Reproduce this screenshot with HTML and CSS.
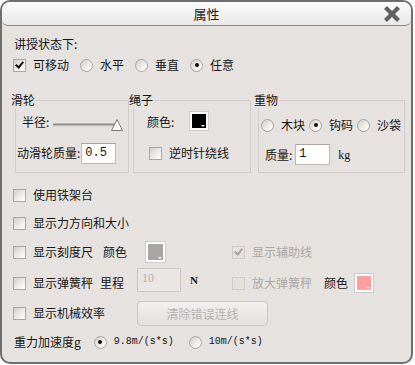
FILE: index.html
```html
<!DOCTYPE html>
<html lang="zh-CN">
<head>
  <meta charset="UTF-8">
  <title>属性</title>
  <link rel="stylesheet" href="styles.css">
</head>
<body>
  <div class="dialog">
    <div class="titlebar">
      <span></span>
      <span class="title">属性</span>
      <svg class="close" width="18" height="18" viewBox="0 0 18 18">
        <path d="M2.5 2.5L15.5 15.5M15.5 2.5L2.5 15.5" stroke="#606060" stroke-width="4.2"/>
      </svg>
    </div>

    <div class="content">
      <div class="row r-head"><span class="txt">讲授状态下:</span></div>
      <div class="row r-mode">
        <label class="opt"><span class="cb on"></span>可移动</label>
        <label class="opt"><span class="rd"></span>水平</label>
        <label class="opt"><span class="rd"></span>垂直</label>
        <label class="opt"><span class="rd on"></span>任意</label>
      </div>

      <div class="groups">
        <fieldset class="fs-pulley">
          <legend>滑轮</legend>
          <div class="frow f1">
            <span class="radius">半径:</span>
            <svg class="slider" width="72" height="16" viewBox="0 0 72 16">
              <line x1="1" y1="8.5" x2="64" y2="8.5" stroke="#8c8c8c" stroke-width="2"/>
              <line x1="1" y1="10" x2="64" y2="10" stroke="#c8c6c4" stroke-width="1"/>
              <path d="M65 3.5L70.5 14.5H59.5Z" fill="#fbfbfb" stroke="#7a7a7a" stroke-width="1" stroke-linejoin="round"/>
            </svg>
          </div>
          <div class="frow f2">
            <span class="mass-lbl">动滑轮质量:</span>
            <span class="num">0.5</span>
          </div>
        </fieldset>

        <fieldset class="fs-rope">
          <legend>绳子</legend>
          <div class="frow f1">
            <span class="color-lbl">颜色:</span>
            <span class="swatch"><span class="fill black"></span></span>
          </div>
          <div class="frow f2">
            <label class="opt ccw"><span class="cb"></span>逆时针绕线</label>
          </div>
        </fieldset>

        <fieldset class="fs-weight">
          <legend>重物</legend>
          <div class="frow f1 kinds">
            <label class="opt"><span class="rd"></span>木块</label>
            <label class="opt"><span class="rd on"></span>钩码</label>
            <label class="opt"><span class="rd"></span>沙袋</label>
          </div>
          <div class="frow f2">
            <span class="w-lbl">质量:</span>
            <span class="num">1</span>
            <span class="unit">kg</span>
          </div>
        </fieldset>
      </div>

      <div class="opts">
        <div class="row h28">
          <label class="opt"><span class="cb"></span>使用铁架台</label>
        </div>
        <div class="row h28">
          <label class="opt"><span class="cb"></span>显示力方向和大小</label>
        </div>
        <div class="row h30">
          <div class="left">
            <label class="opt"><span class="cb"></span>显示刻度尺</label>
            <span class="ruler-color">颜色</span>
            <span class="swatch big ruler-sw"><span class="fill gray"></span></span>
          </div>
          <label class="opt dis"><span class="cb on"></span>显示辅助线</label>
        </div>
        <div class="row h32">
          <div class="left">
            <label class="opt"><span class="cb"></span>显示弹簧秤</label>
            <span class="range-lbl">里程</span>
            <span class="range">10</span>
            <span class="newton">N</span>
          </div>
          <label class="opt dis"><span class="cb"></span>放大弹簧秤</label>
          <span class="spring-color">颜色</span>
          <span class="swatch spring-sw"><span class="fill pink"></span></span>
        </div>
        <div class="row h28">
          <label class="opt"><span class="cb"></span>显示机械效率</label>
          <button class="clear" disabled>清除错误连线</button>
        </div>
        <div class="row h30 gravity">
          <span class="txt">重力加速度g</span>
          <label class="opt g1"><span class="rd on"></span><span class="mono">9.8m/(s*s)</span></label>
          <label class="opt g2"><span class="rd"></span><span class="mono">10m/(s*s)</span></label>
        </div>
      </div>
    </div>
  </div>
</body>
</html>
```

FILE: styles.css
```css
body {
  margin: 0;
  background: #ffffff;
  font-family: "Noto Sans CJK SC", "Noto Sans", sans-serif;
  font-size: 12px;
  line-height: 16px;
  color: #151515;
}

.dialog {
  width: 413px;
  height: 364px;
  box-sizing: border-box;
  border: 2px solid #6e6e6e;
  border-radius: 10px;
  background: #e6e2df;
  overflow: hidden;
}

.titlebar {
  height: 24px;
  box-sizing: border-box;
  display: grid;
  grid-template-columns: 1fr auto 1fr;
  align-items: center;
  background: linear-gradient(#fcfcfc, #e9e8e8);
  border-bottom: 1px solid #8a8a8a;
  border-radius: 6px;
}
.title {
  font-size: 13px;
  color: #222;
}
.close {
  justify-self: end;
  margin-right: 10px;
}

.content {
  padding: 8px 0 0 11px;
}

.row {
  display: flex;
  align-items: center;
  white-space: nowrap;
}
.r-head { height: 20px; }
.r-head .txt { margin-left: 1px; }
.r-mode { height: 22px; gap: 11px; }

.opt {
  display: flex;
  align-items: center;
  gap: 7px;
  flex-shrink: 0;
  white-space: nowrap;
}
.opt.dis { color: #aaa7a5; }

/* checkbox */
.cb {
  width: 13px;
  height: 13px;
  box-sizing: border-box;
  border: 1px solid #a9a7a5;
  background: linear-gradient(135deg, #d2d0ce, #f4f3f2 70%, #ffffff);
  display: flex;
  align-items: center;
  justify-content: center;
}
.cb.on::after {
  content: "";
  width: 3px;
  height: 6px;
  margin-top: -2px;
  border-right: 2px solid #111;
  border-bottom: 2px solid #111;
  transform: rotate(40deg);
}
.dis .cb {
  border-color: #cfcccb;
  background: #e4e1df;
}
.dis .cb.on::after { border-color: #a5a3a1; }

/* radio */
.rd {
  width: 13px;
  height: 13px;
  box-sizing: border-box;
  border: 1px solid #a7a5a3;
  border-radius: 50%;
  background: linear-gradient(135deg, #cfcdcb, #f3f2f1 65%, #ffffff);
  display: flex;
  align-items: center;
  justify-content: center;
}
.rd.on::after {
  content: "";
  width: 4px;
  height: 4px;
  border-radius: 50%;
  background: #111;
}

/* groups */
.groups {
  display: flex;
  margin: 16px 0 0 2px;
}
fieldset {
  margin: 0;
  padding: 0 0 2px;
  min-width: 0;
  height: 81px;
  box-sizing: border-box;
  border: 1px solid #d0ccca;
}
legend {
  padding: 0 1px;
  margin-left: -6px;
  line-height: 16px;
}
.fs-pulley { width: 114px; }
.fs-rope { width: 118px; margin-left: 4px; }
.fs-weight { width: 147px; margin-left: 7px; }

.frow {
  display: flex;
  align-items: center;
  white-space: nowrap;
}
.f1 { height: 28px; }
.f2 { height: 34px; }

.radius { margin-left: 6px; }
.slider { margin-left: 3px; margin-top: 3px; }
.mass-lbl { margin-left: 1px; }

.num {
  width: 35px;
  height: 21px;
  box-sizing: border-box;
  margin-left: 1px;
  padding-left: 3px;
  border: 1px solid #bdbab8;
  border-top-color: #a8a6a4;
  background: #ffffff;
  font-family: "Liberation Mono", monospace;
  font-size: 12px;
  line-height: 19px;
}

.color-lbl { margin-left: 13px; }
.swatch {
  width: 20px;
  height: 20px;
  box-sizing: border-box;
  border: 1px solid #cfcccb;
  padding: 2px;
  background: #ffffff;
  display: flex;
  flex-shrink: 0;
}
.swatch.big { width: 21px; height: 22px; }
.fill {
  flex: 1;
  display: flex;
  align-items: flex-end;
  justify-content: flex-end;
}
.fill::after {
  content: "";
  border-left: 2px solid transparent;
  border-right: 2px solid transparent;
  border-top: 2px solid #ffffff;
  margin: 0 1px 1px 0;
}
.fill.black { background: #000000; }
.fill.gray { background: #a6a6a6; }
.fill.pink { background: #ff9e9e; }
.fs-rope .swatch { margin-left: 15px; margin-top: -2px; }
.ccw { margin-left: 15px; }

.kinds { gap: 4px; margin-left: 2px; margin-top: 3px; }
.fs-weight .f2 { height: 31px; }
.w-lbl { margin-left: 6px; }
.fs-weight .num { margin-left: 3px; }
.unit {
  margin-left: 8px;
  font-family: "Liberation Serif", serif;
  font-size: 12px;
}

/* lower options */
.opts { margin-top: 8px; }
.h28 { height: 28px; }
.h30 { height: 30px; }
.h32 { height: 32px; }
.left {
  width: 219px;
  flex-shrink: 0;
  display: flex;
  align-items: center;
}
.ruler-color { margin-left: 10px; }
.ruler-sw { margin-left: 18px; }
.range-lbl { margin-left: 7px; }
.range {
  width: 44px;
  height: 24px;
  box-sizing: border-box;
  margin: -6px 0 0 13px;
  padding-left: 4px;
  border: 1px solid #cbc8c6;
  background: #e9e6e4;
  color: #b3b0ae;
  font-family: "Liberation Serif", serif;
  font-size: 12px;
  line-height: 18px;
}
.newton {
  margin-left: 9px;
  margin-top: -6px;
  font-family: "Liberation Serif", serif;
  font-weight: bold;
  font-size: 11px;
}
.spring-color { margin-left: 12px; }
.spring-sw { margin-left: 6px; }

.clear {
  width: 131px;
  height: 25px;
  flex-shrink: 0;
  margin-left: 32px;
  border: 1px solid #cac7c5;
  border-radius: 4px;
  background: linear-gradient(#f2f0ef, #e3e0de);
  color: #b5b2b0;
  font-family: "Noto Sans CJK SC", sans-serif;
  font-size: 12px;
  padding: 0;
}

.gravity .txt { margin-left: 1px; }
.g1 { margin-left: 13px; }
.g2 { margin-left: 15px; }
.mono {
  font-family: "Liberation Mono", monospace;
  font-size: 10px;
}
```
